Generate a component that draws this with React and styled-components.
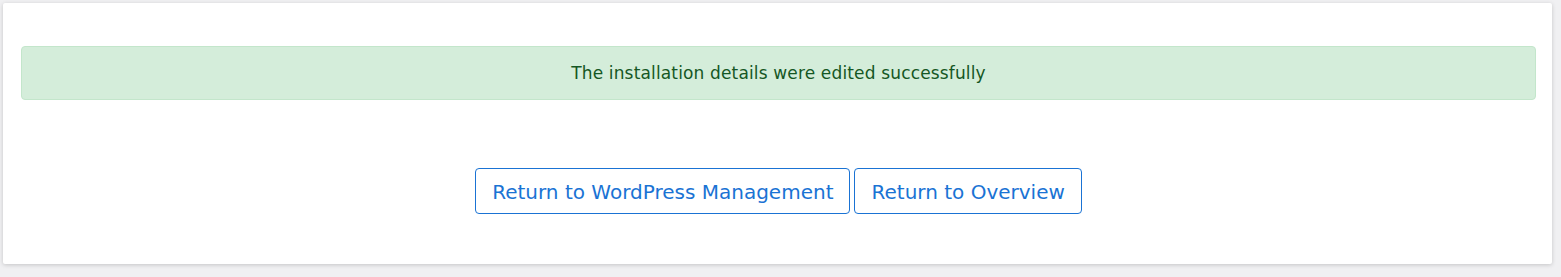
import React from "react";
import styled, { createGlobalStyle } from "styled-components";

const Global = createGlobalStyle`
  html, body { margin: 0; padding: 0; background: #f0f0f2; }
  body { font-family: "DejaVu Sans", sans-serif; }
  * { box-sizing: border-box; }
`;

const Page = styled.div`
  padding: 3px 9px 12px 3px;
  min-height: 277px;
`;

const Card = styled.div`
  background: #ffffff;
  border-radius: 2px;
  box-shadow: 0 1px 4px rgba(0, 0, 0, 0.18);
  padding: 43px 16px 50px 18px;
`;

const Alert = styled.div`
  background: #d4edda;
  border: 1px solid #c3e6cb;
  border-radius: 4px;
  color: #155724;
  font-size: 17px;
  letter-spacing: 0.15px;
  line-height: 29px;
  padding: 12px 20px 11px;
  text-align: center;
`;

const Actions = styled.div`
  margin-top: 68px;
  display: flex;
  justify-content: center;
  gap: 4px;
`;

const OutlineButton = styled.a`
  display: inline-block;
  border: 1px solid #1a73d4;
  border-radius: 4px;
  color: #1a73d4;
  font-size: 20px;
  line-height: 28px;
  padding: 9px 16px 7px;
  text-decoration: none;
  background: #fff;
`;

export default function App() {
  return (
    <>
      <Global />
      <Page>
        <Card>
          <Alert>The installation details were edited successfully</Alert>
          <Actions>
            <OutlineButton href="#">Return to WordPress Management</OutlineButton>
            <OutlineButton href="#">Return to Overview</OutlineButton>
          </Actions>
        </Card>
      </Page>
    </>
  );
}
